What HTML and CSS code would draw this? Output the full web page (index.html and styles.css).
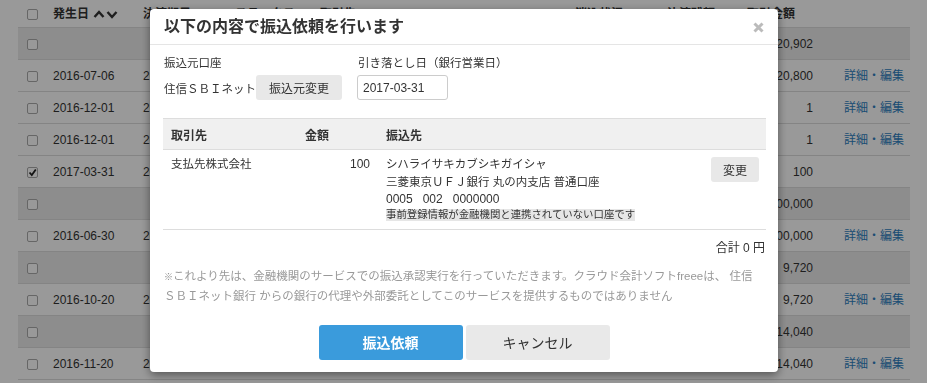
FILE: index.html
```html
<!DOCTYPE html>
<html lang="ja">
<head>
<meta charset="UTF-8">
<title>振込依頼</title>
<link rel="stylesheet" href="styles.css">
</head>
<body>
<div class="page">
  <!-- Deal list behind the dialog -->
  <table class="deal-list">
    <colgroup>
      <col class="c-check"><col class="c-date"><col class="c-due"><col class="c-status"><col class="c-partner">
      <col class="c-state"><col class="c-rest"><col class="c-amount"><col class="c-link">
    </colgroup>
    <thead>
      <tr>
        <th><span class="box"></span></th>
        <th>発生日 <svg class="sort" width="26" height="10" viewBox="0 0 26 10"><path d="M1.5 8 L6 3 L10.5 8 M14.5 3 L19 8 L23.5 3" fill="none" stroke="#333" stroke-width="2.4"/></svg></th>
        <th>決済期日</th>
        <th>ステータス</th>
        <th>取引先</th>
        <th>消込状況</th>
        <th>決済残額</th>
        <th>取引金額</th>
        <th></th>
      </tr>
    </thead>
    <tbody>
      <tr class="group"><td><span class="box"></span></td><td></td><td></td><td></td><td></td><td></td><td></td><td class="num">120,902</td><td></td></tr>
      <tr><td><span class="box"></span></td><td>2016-07-06</td><td>2016-07-31</td><td>未決済</td><td>株式会社サンプル</td><td></td><td class="num">120,800</td><td class="num">120,800</td><td class="link">詳細・編集</td></tr>
      <tr><td><span class="box"></span></td><td>2016-12-01</td><td>2016-12-31</td><td>未決済</td><td>テスト商店</td><td></td><td class="num">1</td><td class="num">1</td><td class="link">詳細・編集</td></tr>
      <tr><td><span class="box"></span></td><td>2016-12-01</td><td>2016-12-31</td><td>未決済</td><td>テスト商店</td><td></td><td class="num">1</td><td class="num">1</td><td class="link">詳細・編集</td></tr>
      <tr><td><span class="box checked"><svg width="9" height="9" viewBox="0 0 9 9"><path d="M1.5 4.5 L3.8 7 L7.8 1.5" fill="none" stroke="#222" stroke-width="1.8"/></svg></span></td><td>2017-03-31</td><td>2017-03-31</td><td>未決済</td><td>支払先株式会社</td><td></td><td class="num">100</td><td class="num">100</td><td></td></tr>
      <tr class="group"><td><span class="box"></span></td><td></td><td></td><td></td><td></td><td></td><td></td><td class="num">100,000</td><td></td></tr>
      <tr><td><span class="box"></span></td><td>2016-06-30</td><td>2016-07-31</td><td>未決済</td><td>サンプル株式会社</td><td></td><td class="num">100,000</td><td class="num">100,000</td><td class="link">詳細・編集</td></tr>
      <tr class="group"><td><span class="box"></span></td><td></td><td></td><td></td><td></td><td></td><td></td><td class="num">9,720</td><td></td></tr>
      <tr><td><span class="box"></span></td><td>2016-10-20</td><td>2016-11-30</td><td>未決済</td><td>サンプル株式会社</td><td></td><td class="num">9,720</td><td class="num">9,720</td><td class="link">詳細・編集</td></tr>
      <tr class="group"><td><span class="box"></span></td><td></td><td></td><td></td><td></td><td></td><td></td><td class="num">114,040</td><td></td></tr>
      <tr><td><span class="box"></span></td><td>2016-11-20</td><td>2016-12-31</td><td>未決済</td><td>サンプル株式会社</td><td></td><td class="num">114,040</td><td class="num">114,040</td><td class="link">詳細・編集</td></tr>
    </tbody>
  </table>
</div>

<!-- Transfer dialog -->
<div class="overlay">
  <div class="modal">
    <div class="modal-header">
      <h3>以下の内容で振込依頼を行います</h3>
      <span class="close"><svg width="11" height="11" viewBox="0 0 11 11"><path d="M1.5 1.5 L9.5 9.5 M9.5 1.5 L1.5 9.5" stroke="#bbb" stroke-width="3"/></svg></span>
    </div>
    <div class="modal-body">
      <div class="form-row">
        <div class="field">
          <div class="label">振込元口座</div>
          <div class="control">
            <span class="ja">住信ＳＢＩネット</span>
            <button class="btn-sub">振込元変更</button>
          </div>
        </div>
        <div class="field">
          <div class="label">引き落とし日（銀行営業日）</div>
          <div class="control">
            <input type="text" class="date-input" value="2017-03-31">
          </div>
        </div>
      </div>

      <table class="transfer-table">
        <colgroup><col class="t-partner"><col class="t-amount"><col><col class="t-action"></colgroup>
        <thead>
          <tr><th>取引先</th><th>金額</th><th>振込先</th><th></th></tr>
        </thead>
        <tbody>
          <tr>
            <td class="ja">支払先株式会社</td>
            <td class="num">100</td>
            <td>
              <div class="ja">シハライサキカブシキガイシャ</div>
              <div class="ja">三菱東京ＵＦＪ銀行 丸の内支店 普通口座</div>
              <div>0005&nbsp;&nbsp;&nbsp;002&nbsp;&nbsp;&nbsp;0000000</div>
              <div class="warn-line"><span class="warn">事前登録情報が金融機関と連携されていない口座です</span></div>
            </td>
            <td class="action"><button class="btn-sub">変更</button></td>
          </tr>
        </tbody>
      </table>

      <div class="total">合計 0 円</div>

      <p class="note"><span class="mark">※</span>これより先は、金融機関のサービスでの振込承認実行を行っていただきます。クラウド会計ソフトfreeeは、 住信<br>ＳＢＩネット銀行 からの銀行の代理や外部委託としてこのサービスを提供するものではありません</p>
    </div>
    <div class="modal-footer">
      <button class="btn-primary">振込依頼</button>
      <button class="btn-cancel">キャンセル</button>
    </div>
  </div>
</div>
</body>
</html>
```

FILE: styles.css
```css
body {
    margin: 0;
    font-family: "Liberation Sans", "Noto Sans CJK JP", sans-serif;
    font-size: 12px;
    color: #333;
    background: #fff;
}

/* Japanese-only text runs a little narrower than the latin digits */
.ja {
    font-size: 11.5px;
}

/* Deal list */
.page {
    padding: 0 17px 0 18px;
}

.deal-list {
    width: 892px;
    table-layout: fixed;
    border-collapse: separate;
    border-spacing: 0;
}

.c-check { width: 27px; }
.c-date { width: 90px; }
.c-due { width: 92px; }
.c-status { width: 85px; }
.c-partner { width: 255px; }
.c-state { width: 92px; }
.c-rest { width: 80px; }
.c-amount { width: 81px; }
.c-link { width: 90px; }

.deal-list th {
    height: 24px;
    padding: 0 8px 3px;
    text-align: left;
    font-weight: bold;
    white-space: nowrap;
    border-bottom: 1px solid #ddd;
}

.deal-list td {
    height: 31px;
    padding: 0 8px;
    line-height: 16px;
    white-space: nowrap;
    overflow: hidden;
    border-bottom: 1px solid #ddd;
}

.deal-list th:first-child,
.deal-list td:first-child {
    padding: 0 0 0 9px;
}

.deal-list .group td {
    background: #ececec;
}

.deal-list .num {
    text-align: right;
    padding-right: 7px;
}

.deal-list .link {
    text-align: right;
    padding-right: 6px;
    color: #2f7fc1;
}

.sort {
    vertical-align: -1px;
    margin-left: 1px;
}

.box {
    display: inline-block;
    width: 9px;
    height: 9px;
    border: 1px solid #aaa;
    border-radius: 2px;
    background: #fff;
    vertical-align: middle;
    position: relative;
}

.box svg {
    position: absolute;
    left: 0;
    top: 0;
}

/* Dialog */
.overlay {
    position: fixed;
    inset: 0;
    background: rgba(0, 0, 0, 0.4);
}

.modal {
    width: 628px;
    margin: 9px 0 0 150px;
    background: #fff;
    border-radius: 4px;
    box-shadow: 0 3px 10px rgba(0, 0, 0, 0.45);
}

.modal-header {
    height: 35px;
    padding: 0 14px;
    display: flex;
    align-items: center;
    justify-content: space-between;
    border-bottom: 1px solid #e5e5e5;
}

.modal-header h3 {
    margin: 0;
    font-size: 16px;
    line-height: 35px;
    font-weight: bold;
    color: #333;
}

.close {
    display: flex;
    margin-top: 1px;
}

.modal-body {
    padding: 10px 12px 0 13px;
}

.form-row {
    display: flex;
    gap: 16px;
    padding-left: 1px;
}

.label {
    font-size: 11.5px;
    line-height: 16px;
    margin-bottom: 4px;
}

.control {
    display: flex;
    align-items: center;
    height: 25px;
}

button {
    font-family: "Liberation Sans", "Noto Sans CJK JP", sans-serif;
    border: none;
    cursor: pointer;
    border-radius: 3px;
}

.btn-sub {
    height: 25px;
    padding: 0 12px;
    background: #e8e8e8;
    color: #333;
    font-size: 12px;
}

.control .btn-sub {
    padding: 0 13px;
}

.date-input {
    box-sizing: border-box;
    width: 91px;
    height: 25px;
    margin-left: -1px;
    padding: 0 5px;
    border: 1px solid #ccc;
    border-radius: 3px;
    font-family: "Liberation Sans", sans-serif;
    font-size: 12px;
    color: #333;
}

.transfer-table {
    width: 603px;
    margin-top: 18px;
    table-layout: fixed;
    border-collapse: separate;
    border-spacing: 0;
}

.t-partner { width: 134px; }
.t-amount { width: 81px; }
.t-action { width: 70px; }

.transfer-table th {
    height: 30px;
    padding: 0 8px;
    text-align: left;
    font-weight: bold;
    background: #f0f0f0;
    border-top: 1px solid #ddd;
    border-bottom: 1px solid #ddd;
}

.transfer-table td {
    padding: 6px 8px 8px;
    line-height: 17.5px;
    vertical-align: top;
    border-bottom: 1px solid #ddd;
}

.transfer-table .num {
    text-align: right;
}

.transfer-table .action {
    padding: 7px 7px 0 0;
    text-align: right;
}

.warn-line {
    line-height: 12px;
}

.warn {
    display: inline-block;
    font-size: 10.4px;
    line-height: 12px;
    background: #e6e6e6;
    vertical-align: top;
}

.total {
    margin-top: 10px;
    padding-right: 1px;
    text-align: right;
    line-height: 17px;
}

.note {
    margin: 10px 0 0;
    padding-left: 1px;
    font-size: 11.5px;
    line-height: 19px;
    color: #999;
    white-space: nowrap;
}

.note .mark {
    font-size: 9px;
    color: #888;
}

.modal-footer {
    display: flex;
    justify-content: center;
    gap: 3px;
    padding: 19px 0 12px;
}

.modal-footer button {
    width: 144px;
    height: 35px;
    font-size: 14px;
}

.btn-primary {
    background: #3a9bdc;
    color: #fff;
    font-weight: bold;
}

.btn-cancel {
    background: #e9e9e9;
    color: #333;
}
```
